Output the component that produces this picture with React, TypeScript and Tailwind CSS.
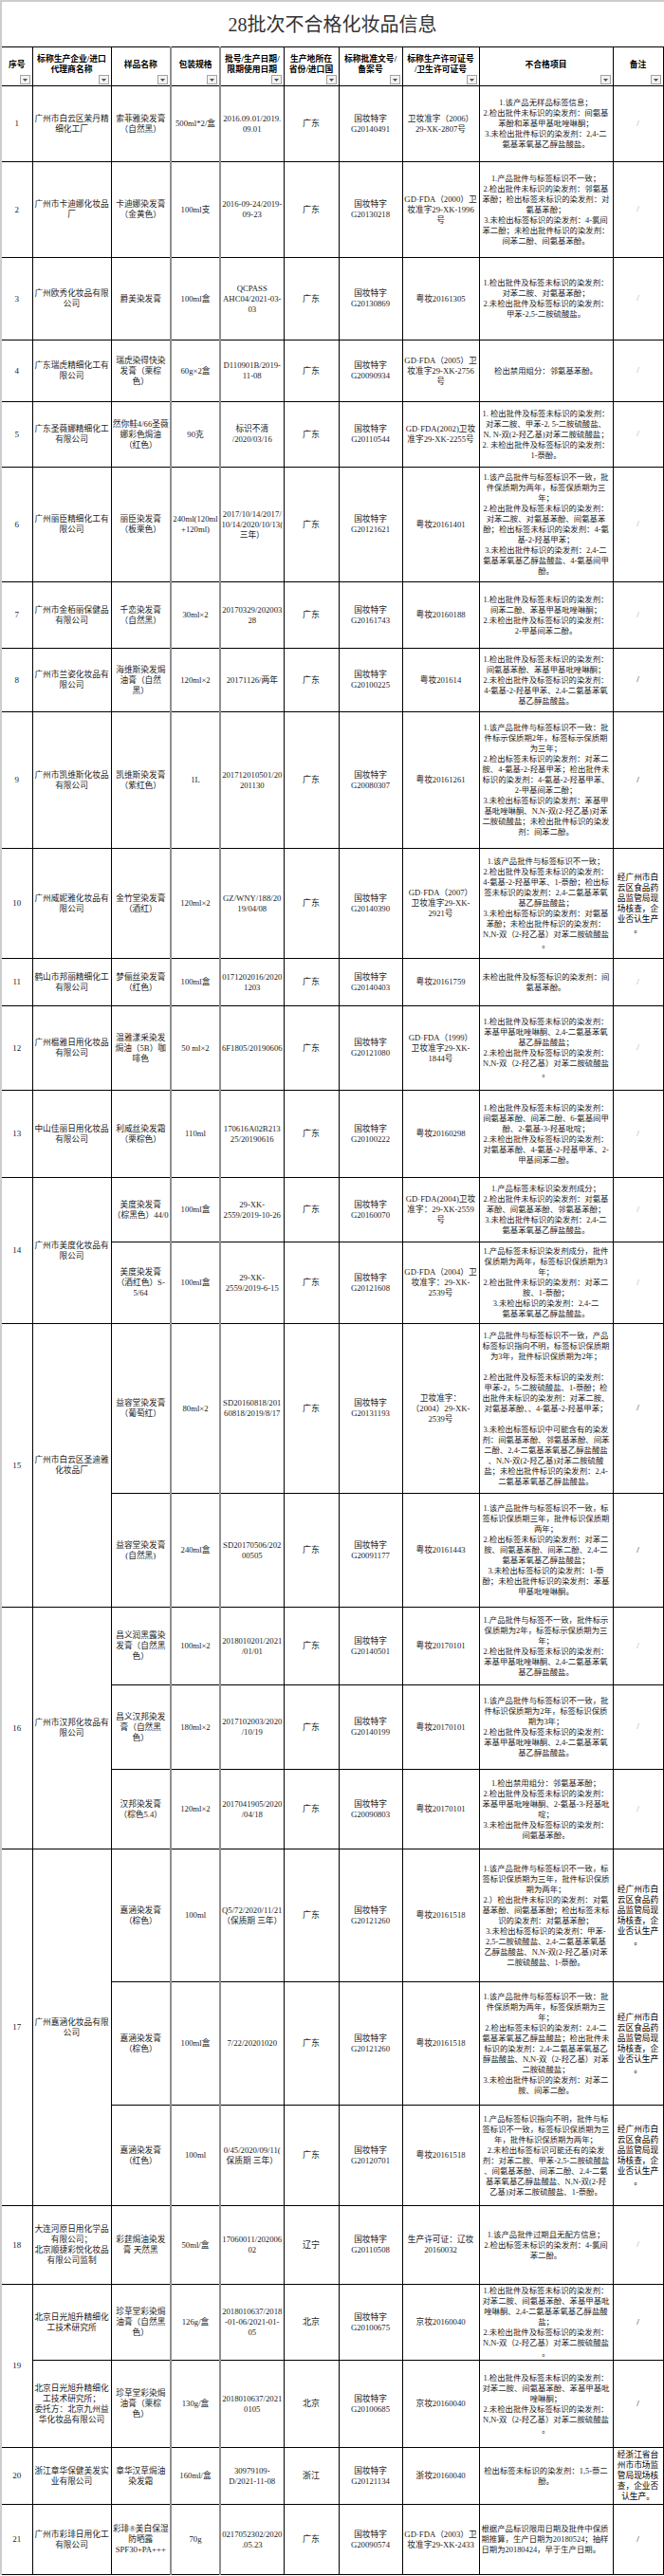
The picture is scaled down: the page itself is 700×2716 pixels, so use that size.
import React from "react";

type Row = {
  h: string;
  no?: [string, number];
  co?: [string, number];
  sa: string;
  pk: string;
  bt: string;
  pv: string;
  ap: string;
  li: string;
  df: string;
  nt: string;
  dark?: boolean;
  left?: boolean;
};

const L = (...lines: string[]) => lines.join("\n");

const NOTE_GZ = L("经广州市白", "云区食品药", "品监管局现", "场核查，企", "业否认生产", "。");

const ROWS: Row[] = [
  {
    h: "h-[80px]", no: ["1", 1], co: [L("广州市白云区茉丹精", "细化工厂"), 1],
    sa: L("索菲雅染发膏", "（自然黑）"), pk: "500ml*2/盒", bt: L("2016.09.01/2019.", "09.01"), pv: "广东",
    ap: L("国妆特字", "G20140491"), li: L("卫妆准字（2006）", "29-XK-2807号"),
    df: L("1.该产品无样品标签信息；", "2.检出批件未标识的染发剂：间氨基", "苯酚和苯基甲基吡唑啉酮；", "3.未检出批件标识的染发剂：2,4-二", "氨基苯氧基乙醇盐酸盐。"),
    nt: "/",
  },
  {
    h: "h-[101px]", no: ["2", 1], co: [L("广州市卡迪娜化妆品", "厂"), 1],
    sa: L("卡迪娜染发膏", "（金黄色）"), pk: "100ml支", bt: L("2016-09-24/2019-", "09-23"), pv: "广东",
    ap: L("国妆特字", "G20130218"), li: L("GD·FDA（2000）卫", "妆准字29-XK-1996", "号"),
    df: L("1.产品批件与标签标识不一致；", "2.检出批件未标识的染发剂：邻氨基", "苯酚；检出标签未标识的染发剂：对", "氨基苯酚；", "3.未检出标签标识的染发剂：4-氯间", "苯二酚；未检出批件标识的染发剂：", "间苯二酚、间氨基苯酚。"),
    nt: "/",
  },
  {
    h: "h-[87px]", no: ["3", 1], co: [L("广州欧秀化妆品有限", "公司"), 1],
    sa: "爵美染发膏", pk: "100ml盒", bt: L("QCPASS", "AHC04/2021-03-", "03"), pv: "广东",
    ap: L("国妆特字", "G20130869"), li: "粤妆20161305",
    df: L("1.检出批件及标签未标识的染发剂：", "对苯二胺、对氨基苯酚；", "2.未检出批件及标签标识的染发剂：", "甲苯-2,5-二胺硫酸盐。"),
    nt: "/",
  },
  {
    h: "h-[65px]", no: ["4", 1], co: [L("广东瑞虎精细化工有", "限公司"), 1],
    sa: L("瑞虎染得快染", "发膏（栗棕", "色）"), pk: "60g×2盒", bt: L("D110901B/2019-", "11-08"), pv: "广东",
    ap: L("国妆特字", "G20090934"), li: L("GD·FDA（2005）卫", "妆准字29-XK-2756", "号"),
    df: "检出禁用组分：邻氨基苯酚。",
    nt: "/",
  },
  {
    h: "h-[69px]", no: ["5", 1], co: [L("广东圣薇娜精细化工", "有限公司"), 1],
    sa: L("然你鲑4/66圣薇", "娜彩色焗油", "（红色）"), pk: "90克", bt: L("标识不清", "/2020/03/16"), pv: "广东",
    ap: L("国妆特字", "G20110544"), li: L("GD·FDA(2002)卫妆", "准字29-XK-2255号"),
    df: L("1. 检出批件及标签未标识的染发剂：", "对苯二胺、甲苯-2, 5-二胺硫酸盐、", "N, N-双(2-羟乙基)对苯二胺硫酸盐；", "2. 未检出批件及标签标识的染发剂：", "1-萘酚。"),
    nt: "/",
  },
  {
    h: "h-[121px]", no: ["6", 1], co: [L("广州丽臣精细化工有", "限公司"), 1],
    sa: L("丽臣染发膏", "（板栗色）"), pk: L("240ml(120ml", "+120ml)"), bt: L("2017/10/14/2017/", "10/14/2020/10/13(", "三年）"), pv: "广东",
    ap: L("国妆特字", "G20121621"), li: "粤妆20161401",
    df: L("1.该产品批件与标签标识不一致，批", "件保质期为两年，标签保质期为三", "年；", "2.检出批件及标签未标识的染发剂：", "对苯二胺、对氨基苯酚、间氨基苯", "酚；检出标签未标识的染发剂：4-氨", "基-2-羟基甲苯；", "3.未检出批件标识的染发剂：2,4-二", "氨基苯氧基乙醇盐酸盐、4-氨基间甲", "酚。"),
    nt: "/",
  },
  {
    h: "h-[70px]", no: ["7", 1], co: [L("广州市金栢丽保健品", "有限公司"), 1],
    sa: L("千恋染发膏", "（自然黑）"), pk: "30ml×2", bt: L("20170329/202003", "28"), pv: "广东",
    ap: L("国妆特字", "G20161743"), li: "粤妆20160188",
    df: L("1.检出批件及标签未标识的染发剂：", "间苯二酚、苯基甲基吡唑啉酮；", "2.未检出批件及标签标识的染发剂：", "2-甲基间苯二酚。"),
    nt: "/",
  },
  {
    h: "h-[67px]", no: ["8", 1], co: [L("广州市兰姿化妆品有", "限公司"), 1],
    sa: L("海维斯染发焗", "油膏（自然", "黑）"), pk: "120ml×2", bt: "20171126/两年", pv: "广东",
    ap: L("国妆特字", "G20100225"), li: "粤妆201614",
    df: L("1.检出批件及标签未标识的染发剂：", "间氨基苯酚、苯基甲基吡唑啉酮；", "2.未检出批件及标签标识的染发剂：", "4-氨基-2-羟基甲苯、2,4-二氨基苯氧", "基乙醇盐酸盐。"),
    nt: "/", dark: true,
  },
  {
    h: "h-[144px]", no: ["9", 1], co: [L("广州市凯维斯化妆品", "有限公司"), 1],
    sa: L("凯维斯染发膏", "（紫红色）"), pk: "1L", bt: L("201712010501/20", "201130"), pv: "广东",
    ap: L("国妆特字", "G20080307"), li: "粤妆20161261",
    df: L("1.该产品批件与标签标识不一致：批", "件标示保质期2年，标签标示保质期", "为三年；", "2.检出标签未标识的染发剂：对苯二", "胺、4-氨基-2-羟基甲苯；检出批件未", "标识的染发剂：4-氨基-2-羟基甲苯、", "2-甲基间苯二酚；", "3.未检出标签标识的染发剂：苯基甲", "基吡唑啉酮、N,N-双(2-羟乙基)对苯", "二胺硫酸盐；未检出批件标识的染发", "剂：间苯二酚。"),
    nt: "/", dark: true,
  },
  {
    h: "h-[116px]", no: ["10", 1], co: [L("广州威妮雅化妆品有", "限公司"), 1],
    sa: L("金竹堂染发膏", "（酒红）"), pk: "120ml×2", bt: L("GZ/WNY/188/20", "19/04/08"), pv: "广东",
    ap: L("国妆特字", "G20140390"), li: L("GD·FDA（2007）", "卫妆准字29-XK-", "2921号"),
    df: L("1.该产品批件与标签标识不一致；", "2.检出批件及标签未标识的染发剂：", "4-氨基-2-羟基甲苯、1-萘酚；检出标", "签未标识的染发剂：2,4-二氨基苯氧", "基乙醇盐酸盐；", "3.未检出标签标识的染发剂：对氨基", "苯酚；未检出批件标识的染发剂：", "N,N-双（2-羟乙基）对苯二胺硫酸盐", "。"),
    nt: NOTE_GZ,
  },
  {
    h: "h-[50px]", no: ["11", 1], co: [L("鹤山市邦丽精细化工", "有限公司"), 1],
    sa: L("梦俪丝染发膏", "（红色）"), pk: "100ml盒", bt: L("0171202016/2020", "1203"), pv: "广东",
    ap: L("国妆特字", "G20140403"), li: "粤妆20161759",
    df: L("未检出批件及标签标识的染发剂：间", "氨基苯酚。"),
    nt: "/",
  },
  {
    h: "h-[89px]", no: ["12", 1], co: [L("广州榅雅日用化妆品", "有限公司"), 1],
    sa: L("温雅漾采染发", "焗油（5B）咖", "啡色"), pk: "50 ml×2", bt: "6F1805/20190606", pv: "广东",
    ap: L("国妆特字", "G20121080"), li: L("GD·FDA（1999）", "卫妆准字29-XK-", "1844号"),
    df: L("1.检出批件及标签未标识的染发剂：", "苯基甲基吡唑啉酮、2,4-二氨基苯氧", "基乙醇盐酸盐；", "2.未检出批件及标签标识的染发剂：", "N,N-双（2-羟乙基）对苯二胺硫酸盐", "。"),
    nt: "/",
  },
  {
    h: "h-[92px]", no: ["13", 1], co: [L("中山佳丽日用化妆品", "有限公司"), 1],
    sa: L("利威丝染发霜", "（栗棕色）"), pk: "110ml", bt: L("170616A02B213", "25/20190616"), pv: "广东",
    ap: L("国妆特字", "G20100222"), li: "粤妆20160298",
    df: L("1.检出批件及标签未标识的染发剂：", "间氨基苯酚、间苯二酚、6-氨基间甲", "酚、2-氨基-3-羟基吡啶；", "2.未检出批件及标签标识的染发剂：", "对氨基苯酚、4-氨基-2-羟基甲苯、2-", "甲基间苯二酚。"),
    nt: "/",
  },
  {
    h: "h-[68px]", no: ["14", 2], co: [L("广州市美度化妆品有", "限公司"), 2],
    sa: L("美度染发膏", "（棕黑色）44/0"), pk: "100ml盒", bt: L("29-XK-", "2559/2019-10-26"), pv: "广东",
    ap: L("国妆特字", "G20160070"), li: L("GD·FDA(2004)卫妆", "准字：29-XK-2559", "号"),
    df: L("1.产品标签未标识染发剂成分；", "2.检出批件未标识的染发剂：对氨基", "苯酚、间氨基苯酚、邻氨基苯酚；", "3.未检出批件标识的染发剂：2,4-二", "氨基苯氧基乙醇盐酸盐。"),
    nt: "/",
  },
  {
    h: "h-[86px]",
    sa: L("美度染发膏", "（酒红色）S-", "5/64"), pk: "100ml盒", bt: L("29-XK-", "2559/2019-6-15"), pv: "广东",
    ap: L("国妆特字", "G20121608"), li: L("GD·FDA（2004）卫", "妆准字：29-XK-", "2539号"),
    df: L("1.产品标签未标识染发剂成分，批件", "保质期为两年，标签标识保质期为3", "年；", "2.检出批件未标识的染发剂：对苯二", "胺、1-萘酚；", "3.未检出标识的染发剂：2,4-二", "氨基苯氧基乙醇盐酸盐。"),
    nt: "/",
  },
  {
    h: "h-[179px]", no: ["15", 2], co: [L("广州市白云区圣迪雅", "化妆品厂"), 2],
    sa: L("益容堂染发膏", "（葡萄红）"), pk: "80ml×2", bt: L("SD20160818/201", "60818/2019/8/17"), pv: "广东",
    ap: L("国妆特字", "G20131193"), li: L("卫妆准字：", "（2004）29-XK-", "2539号"),
    df: L("1.产品批件与标签标识不一致，产品", "标签标识指向不明，标签标识保质期", "为3年，批件标识保质期为2年；", "", "2.检出批件及标签未标识的染发剂：", "甲苯-2，5-二胺硫酸盐、1-萘酚；检", "出批件未标识的染发剂：对苯二胺、", "对氨基苯酚、、4-氨基-2-羟基甲苯；", "", "3.未检出标签标识中可能含有的染发", "剂：间氨基苯酚、邻氨基苯酚、间苯", "二酚、2,4-二氨基苯氧基乙醇盐酸盐", "、N,N-双(2-羟乙基)对苯二胺硫酸", "盐；未检出批件标识的染发剂：2,4-", "二氨基苯氧基乙醇盐酸盐。"),
    nt: "/", dark: true,
  },
  {
    h: "h-[120px]",
    sa: L("益容堂染发膏", "(自然黑)"), pk: "240ml盒", bt: L("SD20170506/202", "00505"), pv: "广东",
    ap: L("国妆特字", "G20091177"), li: "粤妆20161443",
    df: L("1.该产品批件与标签标识不一致，标", "签标识保质期三年，批件标识保质期", "两年；", "2.检出标签未标识的染发剂：对苯二", "胺、间氨基苯酚、间苯二酚、2,4-二", "氨基苯氧基乙醇盐酸盐；", "3.未检出标签标识的染发剂：1-萘", "酚；未检出批件标识的染发剂：苯基", "甲基吡唑啉酮。"),
    nt: "/", dark: true,
  },
  {
    h: "h-[82px]", no: ["16", 3], co: [L("广州市汉邦化妆品有", "限公司"), 3],
    sa: L("昌义润黑露染", "发膏（自然黑", "色）"), pk: "100ml×2", bt: L("2018010201/2021", "/01/01"), pv: "广东",
    ap: L("国妆特字", "G20140501"), li: "粤妆20170101",
    df: L("1.产品批件与标签不一致，批件标示", "保质期为2年，标签标示保质期为三", "年；", "2.检出批件及标签未标识的染发剂：", "苯基甲基吡唑啉酮、2,4-二氨基苯氧", "基乙醇盐酸盐。"),
    nt: "/",
  },
  {
    h: "h-[89px]",
    sa: L("昌义汉邦染发", "膏（自然黑", "色）"), pk: "180ml×2", bt: L("2017102003/2020", "/10/19"), pv: "广东",
    ap: L("国妆特字", "G20140199"), li: "粤妆20170101",
    df: L("1.该产品批件与标签标识不一致，批", "件标识保质期为2年，标签标识保质", "期为3年；", "2.检出批件及标签未标识的染发剂：", "苯基甲基吡唑啉酮、2,4-二氨基苯氧", "基乙醇盐酸盐。"),
    nt: "/",
  },
  {
    h: "h-[84px]",
    sa: L("汉邦染发膏", "（棕色5.4）"), pk: "120ml×2", bt: L("2017041905/2020", "/04/18"), pv: "广东",
    ap: L("国妆特字", "G20090803"), li: "粤妆20170101",
    df: L("1.检出禁用组分：邻氨基苯酚；", "2.检出批件及标签未标识的染发剂：", "苯基甲基吡唑啉酮、2-氨基-3-羟基吡", "啶；", "3.未检出批件及标签标识的染发剂：", "间氨基苯酚。"),
    nt: "/",
  },
  {
    h: "h-[140px]", no: ["17", 3], co: [L("广州嘉涵化妆品有限", "公司"), 3],
    sa: L("嘉涵染发膏", "（棕色）"), pk: "100ml", bt: L("Q5/72/2020/11/21", "（保质期 三年）"), pv: "广东",
    ap: L("国妆特字", "G20121260"), li: "粤妆20161518",
    df: L("1.该产品批件与标签标识不一致，标", "签标识保质期为三年，批件标识保质", "期为两年；", "2.）检出批件未标识的染发剂：对氨", "基苯酚、间氨基苯酚；检出标签未标", "识的染发剂：对氨基苯酚；", "3.未检出标签标识的染发剂：甲苯-", "2,5-二胺硫酸盐、2,4-二氨基苯氧基", "乙醇盐酸盐、N,N-双(2-羟乙基)对苯", "二胺硫酸盐、1-萘酚。"),
    nt: NOTE_GZ,
  },
  {
    h: "h-[130px]",
    sa: L("嘉涵染发膏", "（棕色）"), pk: "100ml盒", bt: "7/22/20201020", pv: "广东",
    ap: L("国妆特字", "G20121260"), li: "粤妆20161518",
    df: L("1.该产品批件与标签标识不一致：批", "件保质期为两年，标签保质期为三", "年；", "2.检出标签未标识的染发剂：2,4-二", "氨基苯氧基乙醇盐酸盐；检出批件未", "标识的染发剂：2,4-二氨基苯氧基乙", "醇盐酸盐、N,N-双（2-羟乙基）对苯", "二胺硫酸盐；", "3.未检出批件标识的染发剂：对苯二", "胺、间苯二酚。"),
    nt: NOTE_GZ,
  },
  {
    h: "h-[106px]",
    sa: L("嘉涵染发膏", "（红色）"), pk: "100ml", bt: L("0/45/2020/09/11(", "保质期 三年）"), pv: "广东",
    ap: L("国妆特字", "G20120701"), li: "粤妆20161518",
    df: L("1.产品标签标识指向不明，批件与标", "签标识不一致，标签标识保质期为三", "年，批件标识保质期为两年；", "2.未检出标签标识可能还有的染发", "剂：对苯二胺、甲苯-2,5-二胺硫酸盐", "、间氨基苯酚、间苯二酚、2,4-二氨", "基苯氧基乙醇盐酸盐、N,N-双(2-羟", "乙基)对苯二胺硫酸盐、1-萘酚。"),
    nt: NOTE_GZ,
  },
  {
    h: "h-[83px]", no: ["18", 1], co: [L("大连河原日用化学品", "有限公司；", "北京顺捷彩悦化妆品", "有限公司监制"), 1],
    sa: L("彩莛焗油染发", "膏 天然黑"), pk: "50ml/盒", bt: L("17060011/202006", "02"), pv: "辽宁",
    ap: L("国妆特字", "G20110508"), li: L("生产许可证：辽妆", "20160032"),
    df: L("1.该产品批件过期且无配方信息；", "2.检出标签未标识的染发剂：4-氯间", "苯二酚。"),
    nt: "/",
  },
  {
    h: "h-[80px]", no: ["19", 2], co: [L("北京日光旭升精细化", "工技术研究所"), 1],
    sa: L("珍草堂彩染焗", "油膏（自然黑", "色）"), pk: "126g/盒", bt: L("2018010637/2018", "-01-06/2021-01-", "05"), pv: "北京",
    ap: L("国妆特字", "G20100675"), li: "京妆20160040",
    df: L("1.检出批件及标签未标识的染发剂：", "对苯二胺、间氨基苯酚、苯基甲基吡", "唑啉酮、2,4-二氨基苯氧基乙醇盐酸", "盐；", "2.未检出批件及标签标识的染发剂：", "N,N-双（2-羟乙基）对苯二胺硫酸盐", "。"),
    nt: "/", dark: true,
  },
  {
    h: "h-[92px]", co: [L("北京日光旭升精细化", "工技术研究所；", "委托方：北京九州益", "华化妆品有限公司"), 1],
    sa: L("珍草堂彩染焗", "油膏（栗棕", "色）"), pk: "130g/盒", bt: L("2018010637/2021", "0105"), pv: "北京",
    ap: L("国妆特字", "G20100685"), li: "京妆20160040",
    df: L("1.检出批件及标签未标识的染发剂：", "对苯二胺、间氨基苯酚、苯基甲基吡", "唑啉酮；", "2.未检出批件及标签标识的染发剂：", "N,N-双（2-羟乙基）对苯二胺硫酸盐", "。"),
    nt: "/", dark: true,
  },
  {
    h: "h-[60px]", no: ["20", 1], co: [L("浙江章华保健美发实", "业有限公司"), 1],
    sa: L("章华汉草焗油", "染发霜"), pk: "160ml/盒", bt: L("30979109-", "D/2021-11-08"), pv: "浙江",
    ap: L("国妆特字", "G20121134"), li: "浙妆20160040",
    df: L("检出标签未标识的染发剂：1,5-萘二", "酚。"),
    nt: L("经浙江省台", "州市市场监", "管局现场核", "查，企业否", "认生产。"),
  },
  {
    h: "h-[74px]", no: ["21", 1], co: [L("广州市彩琲日用化工", "有限公司"), 1],
    sa: L("彩琲®美白保湿", "防晒露", "SPF30+PA+++"), pk: "70g", bt: L("0217052302/2020", ".05.23"), pv: "广东",
    ap: L("国妆特字", "G20090574"), li: L("GD·FDA（2003）卫", "妆准字29-XK-2433"),
    df: L("根据产品标识限用日期及批件中保质", "期推算，生产日期为20180524；抽样", "日期为20180424，早于生产日期。"),
    nt: "/", dark: true, left: true,
  },
];

const HEADERS: string[] = [
  "序号",
  L("标称生产企业/进口", "代理商名称"),
  "样品名称",
  "包装规格",
  L("批号/生产日期/", "限期使用日期"),
  L("生产地所在", "省份/进口国"),
  L("标称批准文号/", "备案号"),
  L("标称生产许可证号", "/卫生许可证号"),
  "不合格项目",
  "备注",
];

const cell = "border border-black align-middle text-center whitespace-pre p-0 text-[#1c1c1c]";
const txt = "text-[8.7px] leading-[11px]";
const thick = "border-l-2 border-l-[#8f8f8f]";

function FilterBox() {
  return (
    <span className="absolute right-[2px] bottom-[1px] w-[11px] h-[10px] border border-[#a3a3a3] bg-[#f3f3f3] flex items-center justify-center">
      <svg width="5" height="3" viewBox="0 0 5 3">
        <polygon points="0,0 5,0 2.5,3" fill="#555" />
      </svg>
    </span>
  );
}

export default function App() {
  return (
    <div className="w-[700px] bg-white border-t-2 border-l-2 border-[#cdcdcd] font-['Liberation_Serif','Noto_Sans_CJK_SC',serif]">
      <div className="h-[47px] w-[697px] flex items-center justify-center text-[20px] text-[#333] font-['Liberation_Serif','Noto_Sans_CJK_SC',serif]">
        28批次不合格化妆品信息
      </div>
      <table className="border-collapse table-fixed w-[697px]">
        <colgroup>
          <col className="w-[32px]" />
          <col className="w-[83px]" />
          <col className="w-[63px]" />
          <col className="w-[52px]" />
          <col className="w-[67px]" />
          <col className="w-[58px]" />
          <col className="w-[67px]" />
          <col className="w-[81px]" />
          <col className="w-[141px]" />
          <col className="w-[53px]" />
        </colgroup>
        <thead>
          <tr className="h-[41px]">
            {HEADERS.map((h, i) => (
              <th
                key={i}
                className={`relative ${cell} ${i === 0 ? "border-l-0" : ""} ${i === 3 || i === 4 ? thick : ""} text-[8.8px] leading-[11px] font-bold text-black pb-[4px]`}
              >
                {h}
                <FilterBox />
              </th>
            ))}
          </tr>
        </thead>
        <tbody>
          {ROWS.map((r, i) => (
            <tr key={i} className={r.h}>
              {r.no && (
                <td rowSpan={r.no[1]} className={`${cell} border-l-0 text-[9px] leading-[11px]`}>
                  {r.no[0]}
                </td>
              )}
              {r.co && (
                <td rowSpan={r.co[1]} className={`${cell} ${txt}`}>
                  {r.co[0]}
                </td>
              )}
              <td className={`${cell} ${txt}`}>{r.sa}</td>
              <td className={`${cell} ${txt} ${thick}`}>{r.pk}</td>
              <td className={`${cell} ${txt} ${thick}`}>{r.bt}</td>
              <td className={`${cell} text-[9px] leading-[11px]`}>{r.pv}</td>
              <td className={`${cell} ${txt}`}>{r.ap}</td>
              <td className={`${cell} ${txt}`}>{r.li}</td>
              <td className={`${cell} text-[8.4px] leading-[11px] ${r.left ? "text-left pl-[2px]" : ""}`}>{r.df}</td>
              {r.nt === "/" ? (
                <td className={`${cell} text-[9px] ${r.dark ? "text-black" : "text-[#9a9a9a]"}`}>/</td>
              ) : (
                <td className={`${cell} text-[8.7px] leading-[11px] text-black`}>{r.nt}</td>
              )}
            </tr>
          ))}
        </tbody>
      </table>
    </div>
  );
}
